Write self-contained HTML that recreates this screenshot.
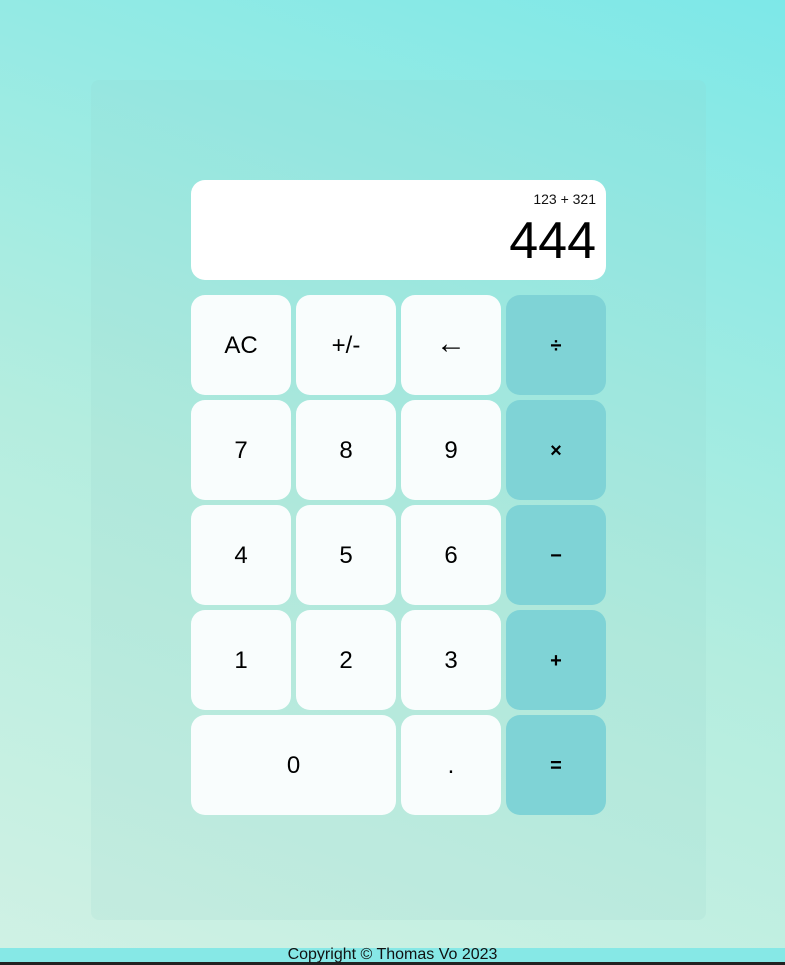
<!DOCTYPE html>
<html><head><style>
html,body{margin:0;padding:0}
body{width:785px;height:965px;position:relative;overflow:hidden;font-family:"Liberation Sans",sans-serif;background:linear-gradient(20deg,#d0f1e4 0%,#b4eddf 45%,#7de8e8 100%)}
.panel{position:absolute;left:91px;top:80px;width:615px;height:840px;border-radius:8px;background:rgba(150,210,200,0.15)}
.disp{position:absolute;left:191px;top:180px;width:415px;height:100px;background:#fff;border-radius:14px}
.prev{position:absolute;right:10px;top:11px;font-size:14px;color:#111}
.cur{position:absolute;right:10px;top:33px;font-size:52px;color:#000;line-height:56px}
.b{position:absolute;width:100px;height:100px;border-radius:14px;background:#f9fdfd;display:flex;align-items:center;justify-content:center;font-size:24px;color:#000;padding-top:2px;box-sizing:border-box}
.o{background:#7fd3d6;font-size:20px;font-weight:bold}
.foot{position:absolute;left:0;top:948px;width:785px;height:14px;background:#86e8e6;border-bottom:3px solid #222;text-align:center;font-size:16px;line-height:13px;color:#111}
</style></head><body>
<div class="panel"></div>
<div class="disp"><div class="prev">123 + 321</div><div class="cur">444</div></div>
<div class="b" style="left:191px;top:295px">AC</div>
<div class="b" style="left:296px;top:295px">+/-</div>
<div class="b" style="left:401px;top:295px;font-size:30px;padding-top:0;padding-bottom:2px">←</div>
<div class="b o" style="left:506px;top:295px">÷</div>
<div class="b" style="left:191px;top:400px">7</div>
<div class="b" style="left:296px;top:400px">8</div>
<div class="b" style="left:401px;top:400px">9</div>
<div class="b o" style="left:506px;top:400px">×</div>
<div class="b" style="left:191px;top:505px">4</div>
<div class="b" style="left:296px;top:505px">5</div>
<div class="b" style="left:401px;top:505px">6</div>
<div class="b o" style="left:506px;top:505px">−</div>
<div class="b" style="left:191px;top:610px">1</div>
<div class="b" style="left:296px;top:610px">2</div>
<div class="b" style="left:401px;top:610px">3</div>
<div class="b o" style="left:506px;top:610px">+</div>
<div class="b" style="left:191px;top:715px;width:205px">0</div>
<div class="b" style="left:401px;top:715px">.</div>
<div class="b o" style="left:506px;top:715px">=</div>
<div class="foot">Copyright © Thomas Vo 2023</div>
</body></html>
